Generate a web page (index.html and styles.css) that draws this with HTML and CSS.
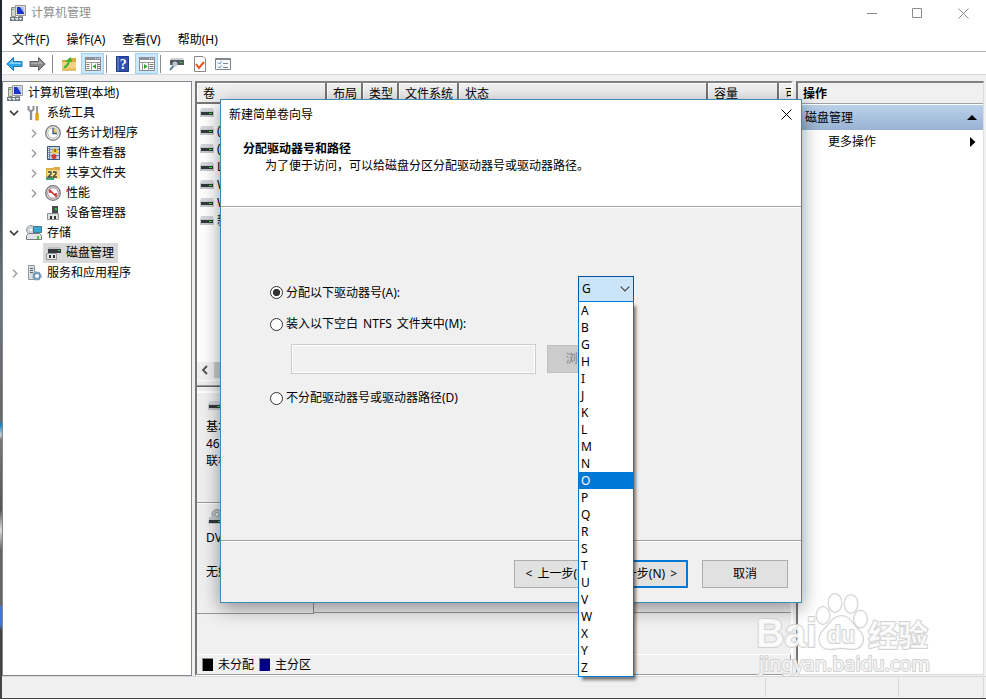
FILE: index.html
```html
<!DOCTYPE html>
<html lang="zh-CN">
<head>
<meta charset="utf-8">
<title>计算机管理</title>
<link rel="stylesheet" href="styles.css">
</head>
<body>
<svg class="defs" width="0" height="0">
  <symbol id="computer" viewBox="0 0 16 16"><path fill="#d3d3ce" stroke="#8b8b84" d="M1.500 2.500h4v9h-4z"/><path fill="#4b6" d="M2 4h2v1H2z"/><path fill="#dcdcdc" stroke="#999" d="M5.500.5h10v10h-10z"/><path fill="#1c35c8" d="M7 2h7v7H7z"/><path fill="#a9c1f7" d="M10 2h4v6z"/><path fill="#999" d="M8 11h5v1H8z"/><path fill="#6f7a80" d="M0 12h13v4H0z"/><path fill="#dde3e6" d="M1 13h3v1H1zm4 0h3v1H5zm4 0h3v1H9zM2 15h2v-1H2zm4 0h2v-1H6zm4 0h1v-1h-1z"/></symbol>
  <symbol id="drive" viewBox="0 0 14 10"><path fill="#d3d7dc" d="M1 0h12l1 4H0z"/><path fill="#c4c8cd" d="M0 3h14v6H0z"/><path fill="#33383b" d="M1 4h12v3H1z"/><path fill="#2fe02f" d="M9 5h3v1H9z"/></symbol>
  <symbol id="right" viewBox="0 0 6 9"><path fill="none" stroke="#a0a0a0" stroke-width="1.500" d="M1 .8l3.700 3.700L1 8.200"/></symbol>
  <symbol id="down" viewBox="0 0 10 6"><path fill="none" stroke="#404040" stroke-width="1.700" d="M1 .8l4 4 4-4"/></symbol>
</svg>

<div class="window">
  <header class="titlebar">
    <svg class="i16"><use href="#computer"/></svg><span>计算机管理</span>
    <svg class="caption" width="103" height="12" viewBox="0 0 103 12"><path fill="none" stroke="#8c8c8c" d="M0 6.500h10M45.500 1.500h9v9h-9zM91.500 1.500l10 10m0-10l-10 10"/></svg>
  </header>
  <nav class="menu"><span>文件(F)</span><span>操作(A)</span><span>查看(V)</span><span>帮助(H)</span></nav>
  <div class="toolbar">
    <svg class="back" width="17" height="16" viewBox="0 0 17 16"><path fill="#2fa8e8" stroke="#1e76b4" d="M.8 8L7.500 1.500v4H16v5H7.500v4z"/><path fill="#85d4fa" d="M3 8l4-4v2.500h8V8z"/></svg>
    <svg class="fwd" width="17" height="16" viewBox="0 0 17 16"><path fill="#888" stroke="#606060" d="M16.200 8L9.500 1.500v4H1v5h8.500v4z"/><path fill="#aaa" d="M14 8l-4-4v2.500H2V8z"/></svg>
    <i class="sep"></i>
    <svg class="up" width="16" height="16" viewBox="0 0 16 16"><path fill="#dca93e" d="M1 4h7l1-2h6v13H1z"/><path fill="#f3d283" d="M1 6h14v9H1z"/><path fill="#e9bf66" d="M1 12h14v3H1z"/><path fill="none" stroke="#3fb52f" stroke-width="2" d="M3 11.500c3-1 4.500-4 5-7"/><path fill="#3fb52f" d="M4 5.500L9.500 1l2 5z"/></svg>
    <span class="tool-on t1"><svg width="16" height="14" viewBox="0 0 16 14"><path fill="#fff" stroke="#82888e" d="M.5.5h15v13H.5z"/><path fill="#8b929a" d="M0 0h16v3H0z"/><path fill="#dde" d="M10 1h1v1h-1zm2 0h1v1h-1zm2 0h1v1h-1z"/><path stroke="#999" d="M0 5.500h16M6.500 6v8M12.500 6v8"/><path stroke="#777" stroke-dasharray="1" stroke-width="3" d="M3 7v6m11-6v6"/><path fill="#2ba32b" d="M11 7v5L7.500 9.500z"/></svg></span>
    <i class="sep"></i>
    <svg class="help" width="13" height="16"><path fill="#2d50ad" stroke="#203b86" d="M.5.5h12v15H.5z"/><path fill="#5272c8" d="M1 1h2v14H1z"/><text x="7.200" y="13" text-anchor="middle">?</text></svg>
    <span class="tool-on t2"><svg width="16" height="14" viewBox="0 0 16 14"><path fill="#fff" stroke="#82888e" d="M.5.5h15v13H.5z"/><path fill="#8b929a" d="M0 0h16v3H0z"/><path fill="#dde" d="M10 1h1v1h-1zm2 0h1v1h-1zm2 0h1v1h-1z"/><path stroke="#999" d="M0 5.500h16M3.500 6v8M9.500 6v8"/><path stroke="#777" stroke-dasharray="1" stroke-width="4" d="M12.500 7v6"/><path fill="#2ba32b" d="M5 7v5l3.500-2.500z"/></svg></span>
    <i class="sep"></i>
    <svg class="disk" width="15" height="14" viewBox="0 0 15 14"><path fill="#ccd0d3" d="M2 1h12l1 3H1z"/><path fill="#555c5f" d="M1 3h14v5H1z"/><path fill="#31dc38" d="M11 5h2v1h-2z"/><path stroke="#64839c" stroke-width="2" d="M6 7l-5 6"/><circle cx="6" cy="7" r="2.500" fill="#bac9d4"/></svg>
    <svg class="check" width="12" height="16" viewBox="0 0 12 16"><path fill="#fff" stroke="#888" d="M.5.500H9l2.500 2.500v12.500H.5z"/><path fill="none" stroke="#ec541b" stroke-width="2" d="M2 8l3 4 5-6"/></svg>
    <svg class="props" width="16" height="12" viewBox="0 0 16 12"><path fill="#fafafa" stroke="#80868d" d="M.5.5h15v11H.5z"/><path stroke="#80868d" d="M0 1.500h16M8 5.500h5M8 9.500h5"/><path fill="none" stroke="#3485d4" d="M3 4.500L4.500 6 6.500 3.500M3 8.500l1.500 1.500 2-2.500"/></svg>
  </div>

  <main class="panes">
    <section class="tree">
      <div class="row l0"><svg class="i16"><use href="#computer"/></svg><span>计算机管理(本地)</span></div>
      <div class="row l1"><svg class="down"><use href="#down"/></svg>
        <svg class="i16" viewBox="0 0 16 16"><path stroke="#8a8f94" stroke-width="2.400" d="M5 6v9"/><path fill="none" stroke="#8a8f94" stroke-width="2" d="M2.500 1v3.500L5 6.500l2.500-2V1"/><path stroke="#777" stroke-width="1.500" d="M11 1v8"/><path stroke="#e0a012" stroke-width="3.400" d="M11 8v7.500"/></svg><span>系统工具</span></div>
      <div class="row l2"><svg class="right"><use href="#right"/></svg>
        <svg class="i16" viewBox="0 0 16 16"><circle cx="8" cy="8" r="7.300" fill="#eee" stroke="#777c82" stroke-width="1.300"/><circle cx="8" cy="8" r="5.200" fill="#fff" stroke="#bbb"/><path fill="#f3c65d" d="M8 8V3a5 5 0 0 1 4 6z"/><path fill="none" stroke="#35588a" stroke-width="1.300" d="M8 3v5.500h4"/></svg><span>任务计划程序</span></div>
      <div class="row l2"><svg class="right"><use href="#right"/></svg>
        <svg class="i16" viewBox="0 0 16 16"><path fill="#6c87bd" stroke="#395384" d="M2.500 1.500h12v13h-12z"/><path fill="#cbd6e6" d="M5 2h9v12H5z"/><path stroke="#8090aa" d="M5 4.500h9m-9 3h9m-9 3h9"/><path fill="#f5c522" d="M10 2l4 6H6z"/><path stroke="#222" d="M10 4v3"/><circle cx="9" cy="11.500" r="2.500" fill="#d53b32"/><path stroke="#fff" stroke-dasharray="1" d="M3.500 2v12"/></svg><span>事件查看器</span></div>
      <div class="row l2"><svg class="right"><use href="#right"/></svg>
        <svg class="i16" viewBox="0 0 16 16"><path fill="#dfac41" d="M1 3h7l1-1h6v12H1z"/><path fill="#f9db87" d="M2 5h13v9H2z"/><path fill="none" stroke="#3a4b3d" stroke-width="1.300" d="M3 7h3v2l-3 3h4m1-5h3v2l-3 3h4"/><path stroke="#2da87d" stroke-width="2" d="M1 14h8"/></svg><span>共享文件夹</span></div>
      <div class="row l2"><svg class="right"><use href="#right"/></svg>
        <svg class="i16" viewBox="0 0 16 16"><circle cx="8" cy="8" r="7.300" fill="#ddd" stroke="#777" stroke-width="1.300"/><circle cx="8" cy="8" r="5.300" fill="#fff" stroke="#a89"/><path fill="none" stroke="#c22" stroke-width="1.500" d="M5 8V5.500l6 5.500V8"/></svg><span>性能</span></div>
      <div class="row l2"><i class="right"></i>
        <svg class="i16" viewBox="0 0 16 16"><path fill="#484c4f" d="M7 1h6v9H7z"/><path fill="#26c93a" d="M10 3h2v2h-2z"/><path fill="#e0e3e5" stroke="#8d9296" d="M2.500 8.500h11v6h-11z"/><path fill="#333" d="M5 11h2v3H5zm4 0h2v3H9z"/></svg><span>设备管理器</span></div>
      <div class="row l1"><svg class="down"><use href="#down"/></svg>
        <svg class="i16" viewBox="0 0 16 16"><circle cx="5" cy="5" r="4.500" fill="#ccd2d5" stroke="#929a9e"/><circle cx="5" cy="5" r="1.300" fill="#fff"/><path fill="#3ba7d3" stroke="#43768c" d="M7.500 1.500h8v6h-8z"/><path fill="#e2e5e7" stroke="#777d82" d="M.5 10.500l2-2h11l2 2v4H.5z"/><path fill="#47c738" d="M11 11h2v3h-2z"/></svg><span>存储</span></div>
      <div class="row l2 selected"><i class="right"></i><div class="pick">
        <svg class="i16" viewBox="0 0 16 16"><path fill="#bdc1c4" d="M4 2h11l1 3H2z"/><path fill="#353a3c" d="M3 4h13v4H3z"/><path fill="#35d53a" d="M13 5h2v1h-2z"/><path fill="#e4e5e6" stroke="#94989b" d="M1.500 8.500h10v6h-10z"/><path fill="#333" d="M4 10h2v3H4zm4 0h2v3H8z"/></svg><span>磁盘管理</span></div></div>
      <div class="row l1"><svg class="right"><use href="#right"/></svg>
        <svg class="i16" viewBox="0 0 16 16"><path fill="#d8dee2" stroke="#8e999f" d="M2.500.5h6v14h-6z"/><path stroke="#57646a" d="M4 3.500h3m-3 2h3m-3 2h3"/><circle cx="11" cy="11" r="3" fill="#fff" stroke="#7298b9" stroke-width="2"/><circle cx="11" cy="11" r="4.300" fill="none" stroke="#7298b9" stroke-dasharray="1.800"/></svg><span>服务和应用程序</span></div>
    </section>

    <section class="center">
      <div class="columns"><span class="c1">卷</span><span class="c2">布局</span><span class="c3">类型</span><span class="c4">文件系统</span><span class="c5">状态</span><span class="c6">容量</span><span class="c7">可</span></div>
      <div class="volumes">
        <div><svg><use href="#drive"/></svg></div>
        <div><svg><use href="#drive"/></svg>(</div>
        <div><svg><use href="#drive"/></svg>(</div>
        <div><svg><use href="#drive"/></svg>L</div>
        <div><svg><use href="#drive"/></svg>W</div>
        <div><svg><use href="#drive"/></svg>W</div>
        <div><svg><use href="#drive"/></svg>新</div>
      </div>
      <div class="hscroll"><svg width="17" height="16"><path fill="none" stroke="#505050" stroke-width="1.800" d="M10 4L6 8l4 4"/></svg><i></i></div>
      <div class="splitter"></div>
      <div class="disks">
        <div class="diskrow"><svg class="dsk" width="14" height="10"><use href="#drive"/></svg><p>基本</p><p>46</p><p>联机</p></div>
        <div class="diskrow cd"><svg width="16" height="16" viewBox="0 0 16 16"><circle cx="9" cy="5.500" r="5" fill="#c5c8ca" stroke="#90969a"/><circle cx="9" cy="5.500" r="2" fill="#eee" stroke="#999"/><path fill="#c4c8cc" d="M1 8h14l1 7H0z"/><path fill="#33383b" d="M1 11h14v3H1z"/><path fill="#2fe02f" d="M10 12h2v1h-2z"/></svg><p>DVD</p><p>&nbsp;</p><p>无媒体</p></div>
        <div class="strip"></div>
      </div>
      <div class="legend"><i></i><span>未分配</span><i class="primary"></i><span>主分区</span></div>
    </section>

    <section class="actions">
      <h2>操作</h2>
      <div class="group"><span>磁盘管理</span><svg width="10" height="5"><path d="M5 0l5 5H0z"/></svg></div>
      <div class="more"><span>更多操作</span><svg width="6" height="10"><path d="M0 0l5.500 5L0 10z"/></svg></div>
    </section>
  </main>
  <footer class="status"><i></i><i></i><i></i></footer>
</div>

<div class="dialog">
  <div class="dlg-head">
    <div class="dlg-title"><span>新建简单卷向导</span><svg width="11" height="11"><path fill="none" stroke="#000" d="M.5.5l10 10m0-10l-10 10"/></svg></div>
    <h1>分配驱动器号和路径</h1>
    <p>为了便于访问，可以给磁盘分区分配驱动器号或驱动器路径。</p>
  </div>
  <div class="dlg-body">
    <div class="opt first"><i class="radio on"></i><span>分配以下驱动器号(A):</span>
      <div class="combo"><span>G</span><svg width="10" height="6"><path fill="none" stroke="#444" stroke-width="1.200" d="M.7.7L5 5 9.300.7"/></svg>
        <ul class="list"><li>A</li><li>B</li><li>G</li><li>H</li><li>I</li><li>J</li><li>K</li><li>L</li><li>M</li><li>N</li><li class="hot">O</li><li>P</li><li>Q</li><li>R</li><li>S</li><li>T</li><li>U</li><li>V</li><li>W</li><li>X</li><li>Y</li><li>Z</li></ul>
      </div>
    </div>
    <div class="opt second"><i class="radio"></i><span>装入以下空白 NTFS 文件夹中(M):</span></div>
    <div class="path"><div class="field"></div><div class="btn browse">浏览(R)...</div></div>
    <div class="opt third"><i class="radio"></i><span>不分配驱动器号或驱动器路径(D)</span></div>
  </div>
  <div class="dlg-foot"><div class="btn">&lt; 上一步(B)</div><div class="btn default">下一步(N) &gt;</div><div class="btn cancel">取消</div></div>
</div>

<svg class="watermark" width="190" height="95" viewBox="0 0 190 95">
  <g class="wm">
    <text class="latin" x="1" y="62" textLength="61" lengthAdjust="spacingAndGlyphs">Bai</text>
    <ellipse cx="68" cy="30.500" rx="6.500" ry="8.500"/><ellipse cx="80" cy="18" rx="6.500" ry="9"/><ellipse cx="96" cy="19" rx="6.500" ry="9"/><ellipse cx="105.500" cy="34" rx="6.500" ry="8.500"/>
    <path d="M86.500 31c9 0 11 9 17 14 8 7 5 19-6 19-5 0-7-1-11-1s-7 1-12 1c-11 0-13-12-6-19 6-5 9-14 18-14z"/>
    <text class="du" x="72" y="58" textLength="28" lengthAdjust="spacingAndGlyphs">du</text>
    <text class="han" x="113" y="61">经验</text>
    <text class="url" x="4" y="86" textLength="171" lengthAdjust="spacingAndGlyphs">jingyan.baidu.com</text>
  </g>
</svg>
</body>
</html>
```
FILE: styles.css
```css
* { box-sizing: border-box; }
body {
  margin: 0; width: 986px; height: 699px; overflow: hidden; position: relative;
  font: 12px/18px "Noto Sans", "Noto Sans CJK SC", sans-serif; color: #000;
  background: linear-gradient(#20252b 0, #333940 150px, #70757a 290px, #686868 400px, #686868 420px, #1687bd 425px, #ccc 435px, #777 440px, #555 510px, #ddd 530px, #666 550px, #666 605px, #4776d6 607px, #4776d6 625px, #444 630px);
}
p, h1, h2, ul { margin: 0; padding: 0; font-size: 12px; list-style: none; }
svg { display: block; flex: none; }
i { display: block; flex: none; }
.defs { position: absolute; }
.i16 { width: 16px; height: 16px; }

.window { margin-left: 2px; height: 698px; display: flex; flex-direction: column; background: #f0f0f0; }
.titlebar { height: 27px; flex: none; display: flex; align-items: center; padding: 0 16px 2px 8px; background: #fff; color: #8f8f8f; gap: 5px; }
.caption { margin-left: auto; }
.menu { height: 25px; flex: none; display: flex; align-items: center; gap: 17px; padding: 2px 0 0 10px; background: #fff; border-bottom: 1px solid #b4b6b9; }
.toolbar { height: 23px; flex: none; display: flex; align-items: center; padding: 1px 0 0 4px; background: #fff; border-bottom: 1px solid #d9d9d9; }
.fwd { margin-left: 6px; }
.sep { width: 1px; height: 18px; background: #8b8b8b; margin-left: 6px; }
.up { margin-left: 8px; }
.tool-on { height: 21px; width: 23px; display: flex; align-items: center; justify-content: center; background: #cce8ff; border: 1px solid #99d1ff; }
.t1 { margin-left: 4px; }
.tool-on + .sep { margin-left: 2px; }
.help { margin-left: 9px; }
.help text { fill: #fff; font: bold 14px "Liberation Serif", serif; }
.t2 { margin-left: 6px; }
.disk { margin-left: 8px; }
.check { margin-left: 10px; }
.props { margin-left: 9px; }

.panes { flex: 1; display: flex; padding-top: 6px; min-height: 0; }
.tree { width: 190px; flex: none; background: #fff; border: 1px solid #828790; padding-top: 1px; }
.row { display: flex; align-items: center; height: 20px; white-space: nowrap; }
.l0 { padding-left: 4px; gap: 5px; }
.l1 { padding-left: 6px; }
.l2 { padding-left: 25px; }
.row svg.down { width: 10px; height: 6px; margin-right: 7px; }
.row .right { width: 6px; height: 9px; margin: 0 8px 0 3px; }
.l1 > .i16 { margin-right: 5px; }
.l2 .i16 { margin-right: 5px; }
.pick { display: flex; align-items: center; height: 20px; background: #d9d9d9; padding: 0 4px 0 2px; margin-left: -2px; }

.center { width: 598px; margin-left: 3px; flex: none; display: flex; flex-direction: column; border: 2px solid; border-color: #828282 #fff #fff #767676; }
.columns { display: flex; height: 21px; flex: none; border-bottom: 2px solid #777; background: #f0f0f0; overflow: hidden; }
.columns span { flex: none; padding: 2px 0 0 6px; border-right: 2px solid #777; box-shadow: inset 1px 1px #fff; white-space: nowrap; overflow: hidden; height: 22px; }
.columns .c1 { width: 130px; } .columns .c2 { width: 36px; } .columns .c3 { width: 36px; } .columns .c4 { width: 60px; }
.columns .c5 { width: 249px; } .columns .c6 { width: 71px; } .columns .c7 { width: 12px; border: 0; }
.volumes { background: #fff; height: 258px; flex: none; }
.volumes div { display: flex; align-items: center; height: 18px; padding-left: 3px; gap: 3px; }
.volumes svg { width: 14px; height: 10px; }
.hscroll { height: 18px; flex: none; display: flex; background: #f0f0f0; }
.hscroll i { width: 300px; height: 16px; background: #cdcdcd; }
.splitter { height: 12px; flex: none; border-top: 1px solid #fff; border-bottom: 1px solid #fff; background: linear-gradient(#eee 0 4px, #999 4px 5px, #666 5px 6px, #f0f0f0 6px); }
.disks { height: 262px; flex: none; position: relative; }
.diskrow { height: 111px; width: 117px; border-right: 1px solid #999; border-bottom: 1px solid #999; box-shadow: inset 0 1px #fff; padding: 9px 0 0 9px; line-height: 17px; }
.diskrow .dsk { margin: 0 0 7px 2px; }
.cd { padding-top: 6px; }
.cd svg { margin: 0 0 4px 2px; }
.strip { height: 1px; background: #999; margin: -2px 0 0 116px; }
.legend { flex: 1; display: flex; align-items: center; padding: 0 0 0 5px; border: solid #999; border-width: 1px 1px 1px 0; border-top-color: #fff; }
.legend i { width: 11px; height: 13px; background: #000; border: 1px solid #888; border-width: 1px 0 0 1px; }
.legend span { margin: 1px 5px 0; }
.legend .primary { background: #000080; }

.actions { flex: 1; margin: 0 2px 1px 3px; background: #fff; border: solid; border-width: 2px 1px 1px 2px; border-color: #828282 #ddd #ddd #767676; }
.actions h2 { height: 21px; line-height: 21px; padding-left: 5px; background: #f0f0f0; border-bottom: 1px solid #a0a0a0; }
.group { height: 25px; margin-top: 1px; display: flex; align-items: center; justify-content: space-between; padding: 0 6px 0 7px; background: linear-gradient(#b9d0ea, #9ab3d3); }
.more { height: 24px; display: flex; align-items: center; justify-content: space-between; padding: 0 7px 0 30px; }
.status { height: 22px; flex: none; border-top: 1px solid #d7d7d7; display: flex; justify-content: flex-end; padding: 1px 2px 1px 0; }
.status i { width: 133px; border-right: 1px solid #d7d7d7; }
.status i:last-child { width: 85px; }

.dialog { position: absolute; left: 220px; top: 99px; width: 582px; height: 504px; display: flex; flex-direction: column; background: #f0f0f0; border: 1px solid #3f8cb5; box-shadow: 0 5px 18px rgba(0,0,0,.42); }
.dlg-head { height: 107px; flex: none; background: #fff; border-bottom: 1px solid #a0a0a0; padding: 5px 9px 0 8px; }
.dlg-title { display: flex; justify-content: space-between; align-items: center; height: 19px; }
.dlg-head h1 { margin: 16px 0 0 14px; }
.dlg-head p { margin: -1px 0 0 36px; }
.dlg-body { flex: 1; border-top: 1px solid #fff; border-bottom: 1px solid #a0a0a0; padding: 68px 0 0 49px; }
.opt { display: flex; align-items: center; height: 18px; gap: 3px; }
.radio { width: 13px; height: 13px; border: 1px solid #333; border-radius: 50%; background: #fff; }
.radio.on { background: radial-gradient(circle, #333 3.300px, #fff 4px); }
.first { height: 26px; align-items: flex-end; }
.first .radio { margin-bottom: 3px; }
.first > span { margin-bottom: 0; }
.combo { position: relative; width: 56px; height: 26px; margin: 0 167px 0 auto; display: flex; align-items: center; justify-content: space-between; padding: 0 3px; background: #cce4f7; border: 1px solid #005499; }
.list { position: absolute; z-index: 2; top: 24px; left: -1px; width: 56px; background: #fff; border: 1px solid #0078d7; box-shadow: 3px 4px 3px -1px rgba(0,0,0,.5); }
.list li { height: 17px; line-height: 17px; padding-left: 2px; }
.list .hot { background: #0078d7; color: #fff; }
.second { margin-top: 13px; word-spacing: 2px; }
.path { display: flex; margin: 11px 0 0 21px; }
.field { width: 245px; height: 30px; border: 1px solid #ccc; box-shadow: inset 0 0 0 1px #fff; }
.btn { width: 86px; height: 28px; display: flex; align-items: center; justify-content: center; border: 1px solid #adadad; background: #e1e1e1; white-space: pre; word-spacing: 2px; }
.browse { margin: 1px 0 0 11px; background: #ccc; border-color: #bfbfbf; color: #838383; }
.third { margin-top: 15px; }
.dlg-foot { height: 61px; flex: none; border-top: 1px solid #fff; display: flex; justify-content: flex-end; padding: 18px 13px 0 0; }
.default { border: 2px solid #0078d7; margin: 0 14px 0 2px; }

.watermark { position: absolute; left: 755px; top: 585px; }
.wm { fill: #fff; fill-opacity: .8; stroke: #d2d2d2; stroke-width: 2px; stroke-linejoin: round; paint-order: stroke; }
.latin { font: bold 41px "Liberation Sans", sans-serif; }
.du { font: bold 24px "Liberation Sans", sans-serif; }
.han { font: bold 30px "Noto Sans CJK SC", sans-serif; }
.url { font: 20px "Noto Sans", sans-serif; }
```
